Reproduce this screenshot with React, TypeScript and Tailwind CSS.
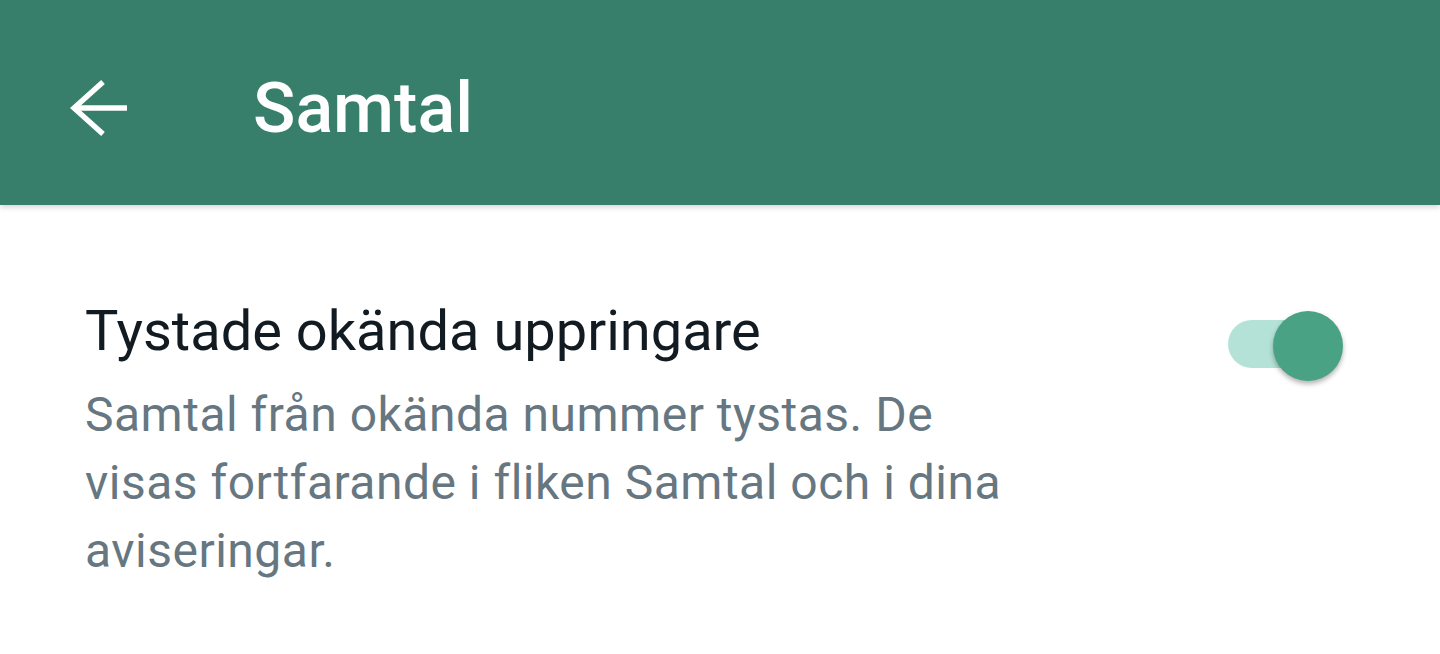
export default function App() {
  return (
    <div className="min-h-[654px] w-full bg-white font-['Roboto','Liberation_Sans',sans-serif]">
      <header className="relative flex h-[205px] items-center bg-[#377f6a] pl-[70px] pt-[11px] shadow-[0_2px_6px_rgba(0,0,0,0.18)]">
        <svg width="60" height="58" viewBox="0 0 60 58" fill="none" className="shrink-0">
          <path d="M33 3 L4 29 L33 55" stroke="white" strokeWidth="5.5" strokeLinejoin="miter" />
          <path d="M4 29 H57" stroke="white" strokeWidth="5.5" />
        </svg>
        <h1 className="ml-[123px] text-[70px] font-medium leading-[1.172] text-white">Samtal</h1>
      </header>

      <main className="flex items-start justify-between pl-[85px] pr-[97px] pt-[92px]">
        <div className="w-[930px]">
          <h2 className="text-[56px] leading-[68px] text-[#111b21]">Tystade okända uppringare</h2>
          <p className="mt-[16px] text-[48px] leading-[68px] tracking-[0.5px] text-[#667781]">
            Samtal från okända nummer tystas. De visas fortfarande i fliken Samtal och i dina aviseringar.
          </p>
        </div>

        <div className="relative mt-[14px] h-[70px] w-[115px] shrink-0">
          <div className="absolute left-0 top-[9px] h-[48px] w-[100px] rounded-full bg-[#b4e2d6]" />
          <div className="absolute right-0 top-0 size-[70px] rounded-full bg-[#49a283] shadow-[0_3px_5px_rgba(0,0,0,0.3)]" />
        </div>
      </main>
    </div>
  );
}
